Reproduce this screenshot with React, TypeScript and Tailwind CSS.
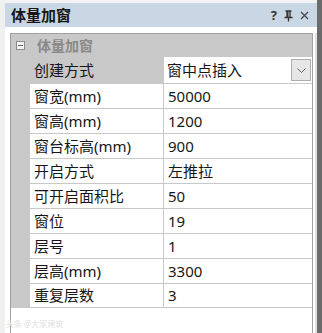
import React from "react";

const rows: [string, string][] = [
  ["窗宽(mm)", "50000"],
  ["窗高(mm)", "1200"],
  ["窗台标高(mm)", "900"],
  ["开启方式", "左推拉"],
  ["可开启面积比", "50"],
  ["窗位", "19"],
  ["层号", "1"],
  ["层高(mm)", "3300"],
  ["重复层数", "3"],
];

const font = { fontFamily: '"Noto Sans", "Noto Sans CJK SC", sans-serif' };

export default function App() {
  return (
    <div className="w-[322px] h-[333px] flex bg-white overflow-hidden text-[#161616]" style={font}>
      <div className="w-[5px] h-full bg-[#f0f0f0] shrink-0" />
      <div className="flex flex-col w-[312px] h-full">
        <div className="h-[3px] bg-[#f3f3f3]" />
        <div className="h-[24px] bg-[#c9d6e4] flex items-center justify-between pl-[6px] pr-[8px]">
          <span className="text-[15px] font-bold leading-none">体量加窗</span>
          <div className="flex items-center gap-[7px] text-[#333]">
            <span className="text-[13px] font-bold leading-none">?</span>
            <svg width="9" height="12" viewBox="0 0 9 12" className="mt-[1px]">
              <path d="M1.5 1H7.5M3 1V7M6 1V7M0.5 7.5H8.5M4.5 7.5V11.5" stroke="#333" strokeWidth="1.3" fill="none" />
              <path d="M3 1H4.5V7H3Z" fill="#333" />
            </svg>
            <svg width="9" height="9" viewBox="0 0 9 9">
              <path d="M1 1L8 8M8 1L1 8" stroke="#444" strokeWidth="1.2" />
            </svg>
          </div>
        </div>
        <div className="flex-1 flex bg-white pt-[6px] pl-[5px]">
          <div className="w-[303px] border-l border-r border-t border-[#a0a0a0] flex flex-col">
            <div className="h-[23px] bg-[#c8c8c8] flex items-center pl-[5px]">
              <svg width="9" height="9" viewBox="0 0 9 9">
                <rect x="0.5" y="0.5" width="8" height="8" fill="#f2f2f2" stroke="#8c8c8c" />
                <path d="M2 4.5H7" stroke="#6a6a6a" strokeWidth="1" />
              </svg>
              <span className="ml-[12px] text-[14px] font-bold text-[#8a8a8a] leading-none">体量加窗</span>
            </div>
            <div className="h-[26px] flex bg-[#c8c8c8]">
              <div className="w-[19px]" />
              <div className="w-[133px] flex items-center pl-[4px] text-[15px]">创建方式</div>
              <div className="w-[149px] bg-white flex items-center pl-[3px] pr-[1px] border-l border-[#c8c8c8]">
                <span className="flex-1 text-[15px]">窗中点插入</span>
                <div className="w-[20px] h-[22px] bg-[#e6e6e6] border border-[#adadad] flex items-center justify-center">
                  <svg width="9" height="5" viewBox="0 0 9 5">
                    <path d="M0.5 0.5L4.5 4.5L8.5 0.5" stroke="#606060" fill="none" strokeWidth="1" />
                  </svg>
                </div>
              </div>
            </div>
            {rows.map(([k, v], i) => (
              <div
                key={k}
                className={`h-[25px] flex border-t border-[#c8c8c8] ${i === rows.length - 1 ? "border-b" : ""}`}
              >
                <div className="w-[19px] bg-[#c8c8c8]" />
                <div className="w-[133px] flex items-center pl-[4px] text-[15px]">{k}</div>
                <div className="w-[149px] flex items-center pl-[4px] text-[15px] border-l border-[#c8c8c8]">{v}</div>
              </div>
            ))}
            <div className="flex-1 relative">
              <span className="absolute left-[-5px] top-[12px] text-[8px] text-[#e0e0e0] leading-none">头条 @大家建筑</span>
            </div>
          </div>
          <div className="w-[2px]" />
          <div className="w-[2px] bg-[#e2e2e2]" />
        </div>
      </div>
      <div className="w-[5px] h-full bg-[#6b6b6b] shrink-0" />
    </div>
  );
}
